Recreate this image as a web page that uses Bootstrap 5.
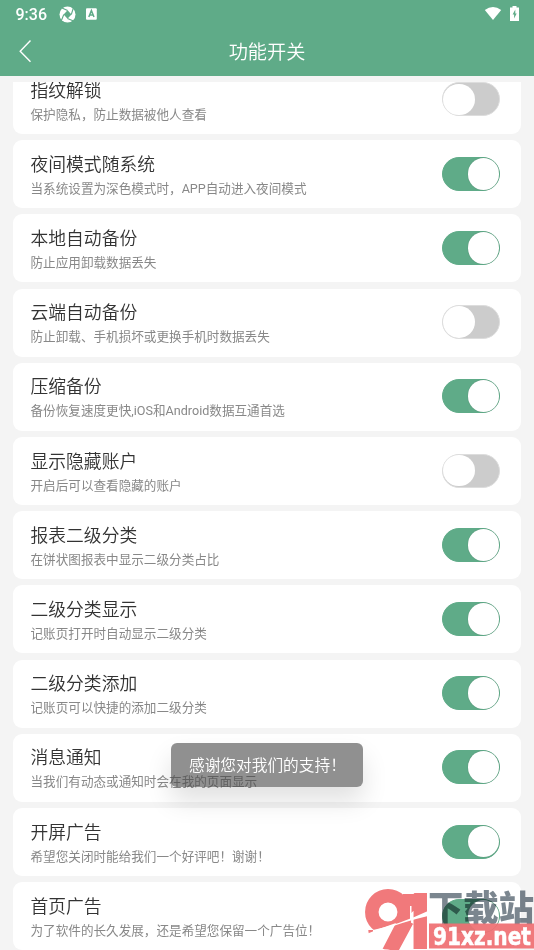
<!DOCTYPE html>
<html lang="zh-CN">
<head>
<meta charset="utf-8">
<meta name="viewport" content="width=device-width, initial-scale=1">
<title>功能开关</title>
<link href="https://cdn.jsdelivr.net/npm/bootstrap@5.3.0/dist/css/bootstrap.min.css" rel="stylesheet">
<style>
:root{--brand:#5fab88}
body{font-family:Roboto,"Noto Sans CJK SC",sans-serif;background:#f4f4f4;height:950px}
.app-head{background:var(--brand);height:76px}
.status{height:28px;padding:0 15px 0 15.5px}
.clock{font-size:16px;font-weight:500;line-height:29px;width:43px}
.title-row{height:48px}
.page-title{font-size:19.2px;line-height:49px;font-weight:350}
.back{width:60px}
.settings{margin-top:6px;min-height:0}
.stack{margin-top:-16.1px;gap:6.22px;padding:0 13.3px 0 13px}
.option{height:68px;border-radius:9px;padding:3.2px 20.3px 0 17.5px;flex:none}
.option h2{font-size:17.8px;line-height:26px;color:#333;font-weight:350;margin:0}
.option p{font-size:12.6px;line-height:22px;color:#888;font-weight:400;margin:0}
.toggle{width:58px;height:34px;margin:-4.2px 0 0;border:1px solid #ddd;border-radius:17px;background:#ccc;appearance:none;display:flex;align-items:center;flex:none;padding:0}
.toggle::before{content:"";width:31.8px;height:31.8px;border-radius:50%;background:#fff}
.toggle:checked{background:var(--brand);border-color:var(--brand);justify-content:flex-end}
.toggle:checked::before{box-shadow:0 0 1px #0004}
.notice{left:171px;top:743px;width:192px;height:44px;border-radius:6px;background:rgba(70,70,70,.6);color:#fff;font-size:15.7px;line-height:46px;padding-left:18px;box-shadow:0 14px 26px rgba(0,0,0,.12);font-weight:350}
.brandmark{left:360px;top:884px}
.site-name{mix-blend-mode:multiply}
</style>
<script src="https://cdn.jsdelivr.net/npm/bootstrap@5.3.0/dist/js/bootstrap.bundle.min.js"></script>
</head>
<body class="d-flex flex-column overflow-hidden position-relative">
<header class="app-head text-white flex-shrink-0">
  <div class="status d-flex align-items-center">
    <span class="clock">9:36</span>
    <svg width="17" height="17" viewBox="0 0 17 17"><circle cx="8.5" cy="8.5" r="8" fill="#fff"/><path d="M4.6 8.500 8.600 4.300 12.500 8.500 8.500 12.700Z" fill="#5fab88"/><path d="M8.6 4.600 3 2M12.300 8.500 14.500 1.500M8.500 12.500 14.500 15M4.800 8.500 2 15.500" stroke="#5fab88" stroke-width="1.1"/></svg>
    <svg class="ms-2" width="16" height="16" viewBox="0 0 16 16"><rect x="2" y="2.2" width="10.8" height="11.6" rx="1" fill="#fff"/><path d="m4.8 11 2.6-6.4L10 11M5.8 9h3.2" fill="none" stroke="#5fab88" stroke-width="1.5"/></svg>
    <svg class="ms-auto" width="18" height="18" viewBox="0 0 18 18"><path d="M.8 5Q9-1 17.2 5L9 15Z" fill="#fff"/></svg>
    <svg class="ms-2" width="9" height="16" viewBox="0 0 9 16"><path d="M2.5 0h4v1.5H9V15H0V1.500h2.5Z" fill="#fff"/><path d="M5.3 3.5 2.600 8.500h1.500v4L6.700 7.600H5.3Z" fill="#5fab88"/></svg>
  </div>
  <div class="title-row d-flex">
    <a class="back" href="#" aria-label="返回"><svg width="40" height="46" viewBox="0 0 40 46"><path d="M30.500 12.500 20.200 23.200l10.300 10.500" fill="none" stroke="#fff" stroke-width="1.4"/></svg></a>
    <h1 class="page-title text-center flex-grow-1 m-0">功能开关</h1>
    <span class="back"></span>
  </div>
</header>
<main class="settings flex-grow-1 overflow-hidden">
  <div class="stack d-flex flex-column">
    <section class="option bg-white d-flex align-items-center justify-content-between"><div><h2>指纹解锁</h2><p>保护隐私，防止数据被他人查看</p></div><input class="toggle" type="checkbox"></section>
    <section class="option bg-white d-flex align-items-center justify-content-between"><div><h2>夜间模式随系统</h2><p>当系统设置为深色模式时，APP自动进入夜间模式</p></div><input class="toggle" type="checkbox" checked></section>
    <section class="option bg-white d-flex align-items-center justify-content-between"><div><h2>本地自动备份</h2><p>防止应用卸载数据丢失</p></div><input class="toggle" type="checkbox" checked></section>
    <section class="option bg-white d-flex align-items-center justify-content-between"><div><h2>云端自动备份</h2><p>防止卸载、手机损坏或更换手机时数据丢失</p></div><input class="toggle" type="checkbox"></section>
    <section class="option bg-white d-flex align-items-center justify-content-between"><div><h2>压缩备份</h2><p>备份恢复速度更快,iOS和Android数据互通首选</p></div><input class="toggle" type="checkbox" checked></section>
    <section class="option bg-white d-flex align-items-center justify-content-between"><div><h2>显示隐藏账户</h2><p>开启后可以查看隐藏的账户</p></div><input class="toggle" type="checkbox"></section>
    <section class="option bg-white d-flex align-items-center justify-content-between"><div><h2>报表二级分类</h2><p>在饼状图报表中显示二级分类占比</p></div><input class="toggle" type="checkbox" checked></section>
    <section class="option bg-white d-flex align-items-center justify-content-between"><div><h2>二级分类显示</h2><p>记账页打开时自动显示二级分类</p></div><input class="toggle" type="checkbox" checked></section>
    <section class="option bg-white d-flex align-items-center justify-content-between"><div><h2>二级分类添加</h2><p>记账页可以快捷的添加二级分类</p></div><input class="toggle" type="checkbox" checked></section>
    <section class="option bg-white d-flex align-items-center justify-content-between"><div><h2>消息通知</h2><p>当我们有动态或通知时会在我的页面显示</p></div><input class="toggle" type="checkbox" checked></section>
    <section class="option bg-white d-flex align-items-center justify-content-between"><div><h2>开屏广告</h2><p>希望您关闭时能给我们一个好评吧！谢谢！</p></div><input class="toggle" type="checkbox" checked></section>
    <section class="option bg-white d-flex align-items-center justify-content-between"><div><h2>首页广告</h2><p>为了软件的长久发展，还是希望您保留一个广告位！</p></div><input class="toggle" type="checkbox" checked></section>
  </div>
</main>
<div class="notice position-absolute" role="status">感谢您对我们的支持！</div>
<svg class="brandmark site-name position-absolute" width="174" height="44" viewBox="0 0 174 44">
  <text x="68" y="37" textLength="106" lengthAdjust="spacingAndGlyphs" font-family="Noto Sans CJK SC,sans-serif" font-weight="900" font-size="35.5" fill="#7b868f">下载站</text>
</svg>
<svg class="brandmark position-absolute" width="174" height="66" viewBox="0 0 174 66">
  <g fill="#f1797b" stroke="#f1797b">
    <text x="7" y="62.500" textLength="45" lengthAdjust="spacingAndGlyphs" stroke-width="3" font-family="Inter,sans-serif" font-weight="900" font-size="72">9</text>
    <text x="44" y="63" textLength="24" lengthAdjust="spacingAndGlyphs" stroke-width="4" font-family="Inter,sans-serif" font-weight="900" font-size="72">1</text>
    <circle cx="28" cy="28" r="16.200" fill="#fff" stroke-width="13.500"/>
    <path d="M43 18H62" stroke-width="16"/>
    <path d="M46 36 30 66" stroke-width="17"/>
  </g>
  <path d="M4 51 19 45 36 39 22 66H4ZM39 66 53 40V66Z" fill="#fff"/>
  <path d="M13 46Q38 41 68 27v5Q46 37 13 49ZM50 22h1.500v14H50Z" fill="#fff"/>
  <rect x="69" y="39.500" width="105" height="25" fill="#ef6f72" fill-opacity=".93"/>
  <text x="73" y="61" textLength="98" lengthAdjust="spacingAndGlyphs" font-family="DejaVu Sans Condensed,DejaVu Sans,sans-serif" font-weight="700" font-size="25" fill="#fff" stroke="#fff" stroke-width=".5">91xz.net</text>
</svg>
</body>
</html>
